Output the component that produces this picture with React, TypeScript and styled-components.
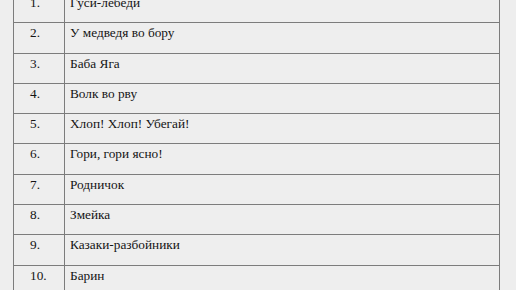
import styled, { createGlobalStyle } from 'styled-components';

const GlobalStyle = createGlobalStyle`
  html, body {
    margin: 0;
    padding: 0;
    background: #eeeeee;
  }
  body {
    font-family: "Liberation Serif", "Times New Roman", serif;
    color: #141414;
  }
`;

const games = [
  'Гуси-лебеди',
  'У медведя во бору',
  'Баба Яга',
  'Волк во рву',
  'Хлоп! Хлоп! Убегай!',
  'Гори, гори ясно!',
  'Родничок',
  'Змейка',
  'Казаки-разбойники',
  'Барин',
];

export default function App() {
  return (
    <>
      <GlobalStyle />
      <Page>
        <GameTable>
          <tbody>
            {games.map((name, i) => (
              <Row key={name}>
                <NumCell>{i + 1}.</NumCell>
                <NameCell>{name}</NameCell>
              </Row>
            ))}
          </tbody>
        </GameTable>
      </Page>
    </>
  );
}

const Page = styled.div`
  width: 516px;
  height: 290px;
  overflow: hidden;
  padding-left: 13px;
  box-sizing: border-box;
`;

const GameTable = styled.table`
  margin-top: -8px;
  width: 487px;
  border-collapse: collapse;
  font-size: 13.3px;
`;

const Row = styled.tr`
  height: 30.3px;
`;

const Cell = styled.td`
  border: 1px solid #7c7c7c;
  vertical-align: top;
  padding: 2px 5px 0;
  line-height: 15px;
`;

const NumCell = styled(Cell)`
  width: 29px;
  padding-left: 16px;
  text-align: left;
`;

const NameCell = styled(Cell)``;
